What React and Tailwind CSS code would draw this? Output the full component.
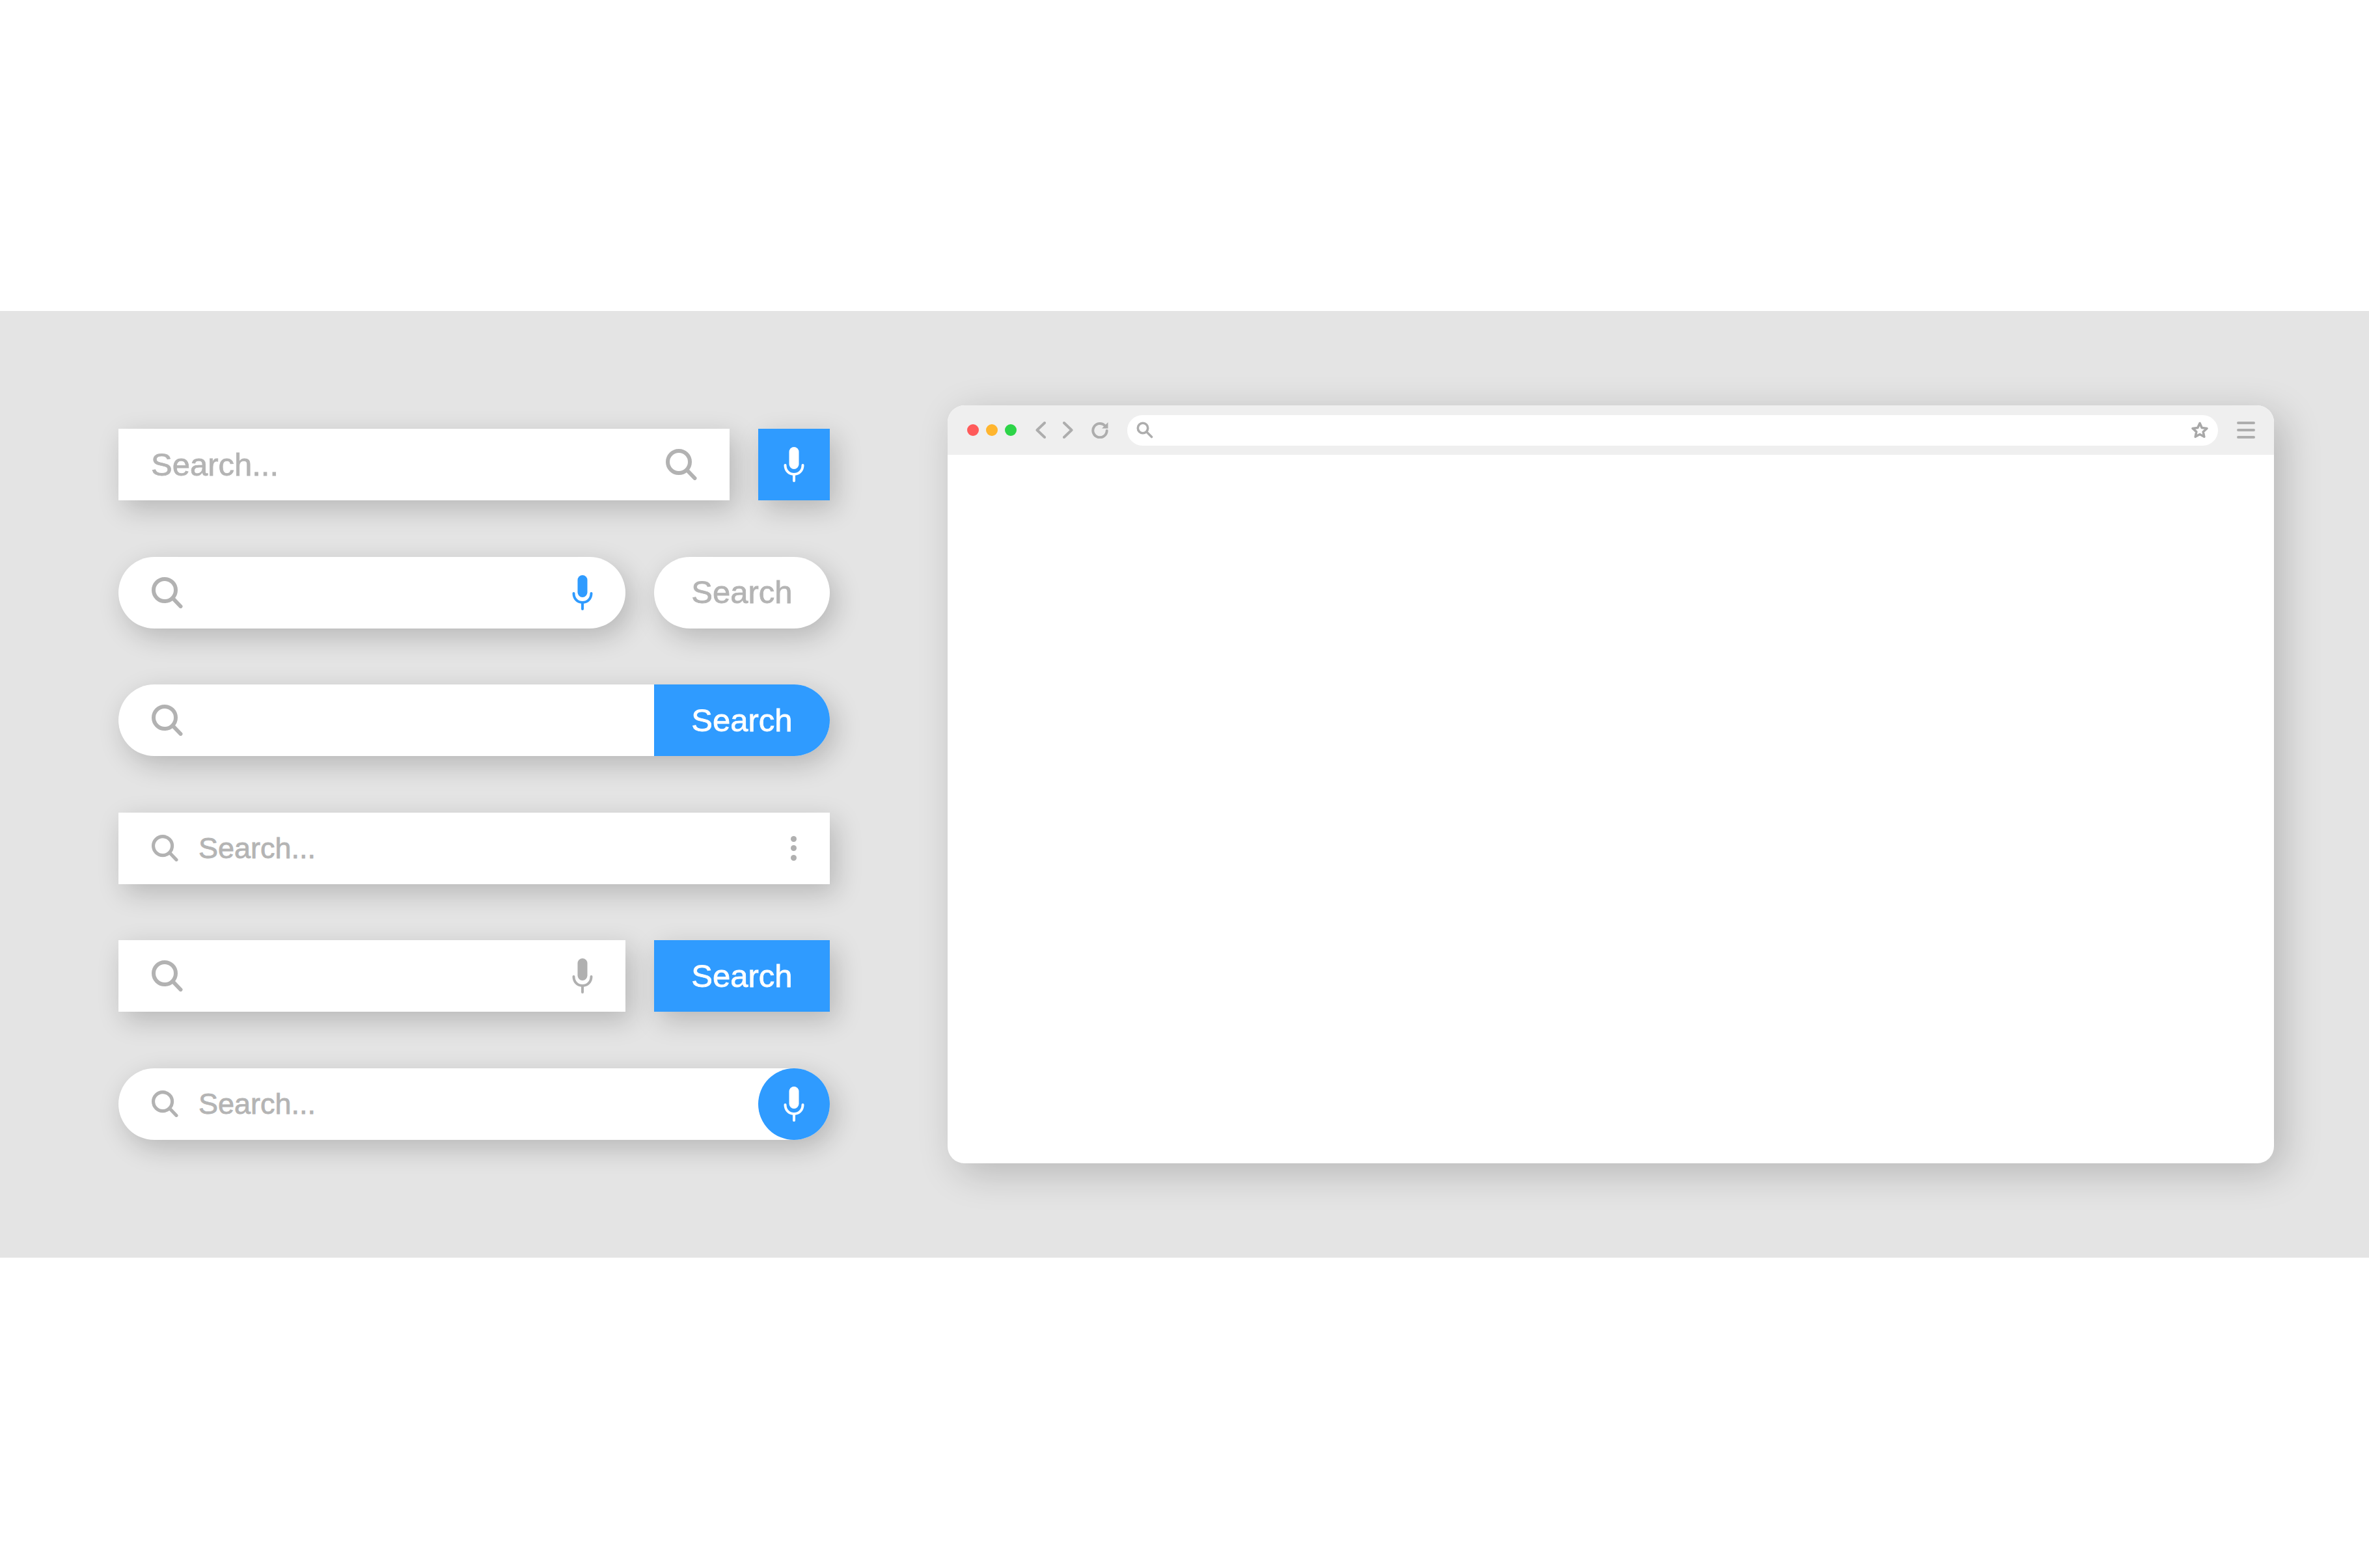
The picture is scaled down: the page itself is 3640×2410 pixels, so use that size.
import React from 'react';

const SearchIcon = ({ className = 'w-[48px] h-[48px]' }) => (
  <svg viewBox="0 0 48 48" fill="none" stroke="currentColor" strokeWidth="6" strokeLinecap="round" className={`${className} shrink-0 text-[#b2b2b2]`}>
    <circle cx="20" cy="20" r="17" />
    <path d="M33 33 L44.5 45" />
  </svg>
);

const MicIcon = ({ className = 'text-white' }) => (
  <svg viewBox="0 0 34 54" fill="none" className={`w-[34px] h-[54px] shrink-0 ${className}`}>
    <rect x="9.5" y="0" width="15" height="34" rx="7.5" fill="currentColor" />
    <path d="M3.5 28c0 8.5 6 14 13.5 14s13.5-5.5 13.5-14M17 42v10" stroke="currentColor" strokeWidth="4" strokeLinecap="round" />
  </svg>
);

const barShadow = 'shadow-[9px_13px_42px_rgba(0,0,0,0.2)]';

const SearchText = ({ className = 'text-[49px]' }) => (
  <span className={`leading-none text-[#b4b4b4] [-webkit-text-stroke:0.8px_#b4b4b4] ${className}`}>Search...</span>
);

const ButtonText = ({ className = 'text-white' }) => (
  <span className={`text-[49px] leading-none [-webkit-text-stroke:0.8px_currentColor] ${className}`}>Search</span>
);

const SearchBars = () => (
  <div className="flex w-[1093px] shrink-0 flex-col gap-[86.6px] pt-[181px]">
    {/* Plain box + mic button */}
    <div className="flex h-[110px] gap-[44px]">
      <div className={`flex flex-1 items-center justify-between bg-white pl-[50px] pr-[50px] ${barShadow}`}>
        <SearchText />
        <SearchIcon />
      </div>
      <div className={`flex w-[110px] items-center justify-center bg-[#2f9bff] ${barShadow}`}>
        <MicIcon />
      </div>
    </div>

    {/* Pill + pill button */}
    <div className="flex h-[110px] gap-[44px]">
      <div className={`flex flex-1 items-center justify-between rounded-full bg-white pl-[51px] pr-[49px] ${barShadow}`}>
        <SearchIcon />
        <MicIcon className="text-[#2f9bff]" />
      </div>
      <div className={`flex w-[270px] items-center justify-center rounded-full bg-white ${barShadow}`}>
        <ButtonText className="text-[#b4b4b4]" />
      </div>
    </div>

    {/* Pill joined to blue button */}
    <div className={`flex h-[110px] items-center justify-between overflow-hidden rounded-full bg-white pl-[51px] ${barShadow}`}>
      <SearchIcon />
      <div className="flex h-full w-[270px] items-center justify-center bg-[#2f9bff]">
        <ButtonText />
      </div>
    </div>

    {/* Box with overflow menu */}
    <div className={`flex h-[110px] items-center bg-white pl-[51px] pr-[51px] ${barShadow}`}>
      <SearchIcon className="w-[41px] h-[41px]" />
      <div className="ml-[31px] flex-1">
        <SearchText className="text-[45px]" />
      </div>
      <div className="flex flex-col gap-[5.5px]">
        <span className="h-[9px] w-[9px] rounded-full bg-[#b0b0b0]" />
        <span className="h-[9px] w-[9px] rounded-full bg-[#b0b0b0]" />
        <span className="h-[9px] w-[9px] rounded-full bg-[#b0b0b0]" />
      </div>
    </div>

    {/* Box + blue button */}
    <div className="flex h-[110px] gap-[44px]">
      <div className={`flex flex-1 items-center justify-between bg-white pl-[51px] pr-[49px] ${barShadow}`}>
        <SearchIcon />
        <MicIcon className="text-[#b0b0b0]" />
      </div>
      <div className={`flex w-[270px] items-center justify-center bg-[#2f9bff] ${barShadow}`}>
        <ButtonText />
      </div>
    </div>

    {/* Pill with round mic */}
    <div className={`flex h-[110px] items-center rounded-full bg-white pl-[51px] ${barShadow}`}>
      <SearchIcon className="w-[41px] h-[41px]" />
      <div className="ml-[31px] flex-1">
        <SearchText className="text-[45px]" />
      </div>
      <div className="flex h-[110px] w-[110px] items-center justify-center rounded-full bg-[#2f9bff]">
        <MicIcon />
      </div>
    </div>
  </div>
);

const BrowserWindow = () => (
  <div className="ml-[181px] mt-[145px] h-[1165px] w-[2038px] shrink-0 overflow-hidden rounded-[26px] bg-white shadow-[14px_14px_60px_rgba(0,0,0,0.2)]">
    <div className="flex h-[76px] items-center bg-[#efefef] pl-[30px] pr-[29px]">
      <div className="flex gap-[11px]">
        <span className="h-[18px] w-[18px] rounded-full bg-[#ff5a5a]" />
        <span className="h-[18px] w-[18px] rounded-full bg-[#ffb52e]" />
        <span className="h-[18px] w-[18px] rounded-full bg-[#2dd448]" />
      </div>

      {/* Back */}
      <svg viewBox="0 0 16 26" fill="none" stroke="#adadad" strokeWidth="4" strokeLinecap="round" strokeLinejoin="round" className="ml-[29px] h-[26px] w-[16px]">
        <path d="M14 2 L2.5 13 L14 24" />
      </svg>
      {/* Forward */}
      <svg viewBox="0 0 16 26" fill="none" stroke="#adadad" strokeWidth="4" strokeLinecap="round" strokeLinejoin="round" className="ml-[26px] h-[26px] w-[16px]">
        <path d="M2 2 L13.5 13 L2 24" />
      </svg>
      {/* Reload */}
      <svg viewBox="0 0 26 26" fill="none" className="ml-[28px] h-[26px] w-[26px]">
        <path d="M21 6.5 A10.7 10.7 0 1 0 23.7 14" stroke="#adadad" strokeWidth="4" strokeLinecap="round" />
        <path d="M25.5 1 L25.5 10.5 L16 10.5 Z" fill="#adadad" />
      </svg>

      <div className="ml-[29px] flex h-[47px] flex-1 items-center justify-between rounded-full bg-white pl-[14px] pr-[15px]">
        <svg viewBox="0 0 26 26" fill="none" stroke="#adadad" strokeWidth="3.6" strokeLinecap="round" className="h-[26px] w-[26px]">
          <circle cx="10" cy="10" r="7.7" />
          <path d="M16 16 L23.5 23.5" />
        </svg>
        <svg viewBox="0 0 26 26" fill="none" stroke="#a8a8a8" strokeWidth="3.6" strokeLinejoin="round" className="h-[26px] w-[26px]">
          <polygon points="13,2.5 16.2,9.55 23.9,10.45 18.2,15.7 19.76,23.3 13,19.5 6.24,23.3 7.77,15.7 2.06,10.45 9.77,9.55" />
        </svg>
      </div>

      <div className="ml-[29px] flex w-[28px] flex-col gap-[7px]">
        <span className="h-[4px] rounded-full bg-[#adadad]" />
        <span className="h-[4px] rounded-full bg-[#adadad]" />
        <span className="h-[4px] rounded-full bg-[#adadad]" />
      </div>
    </div>
  </div>
);

const App = () => (
  <div className="h-[2410px] w-[3640px] bg-white pt-[478px] font-['Liberation_Sans',Arial,sans-serif]">
    <div className="flex h-[1455px] bg-[#e4e4e4] pl-[182px]">
      <SearchBars />
      <BrowserWindow />
    </div>
  </div>
);

export default App;
